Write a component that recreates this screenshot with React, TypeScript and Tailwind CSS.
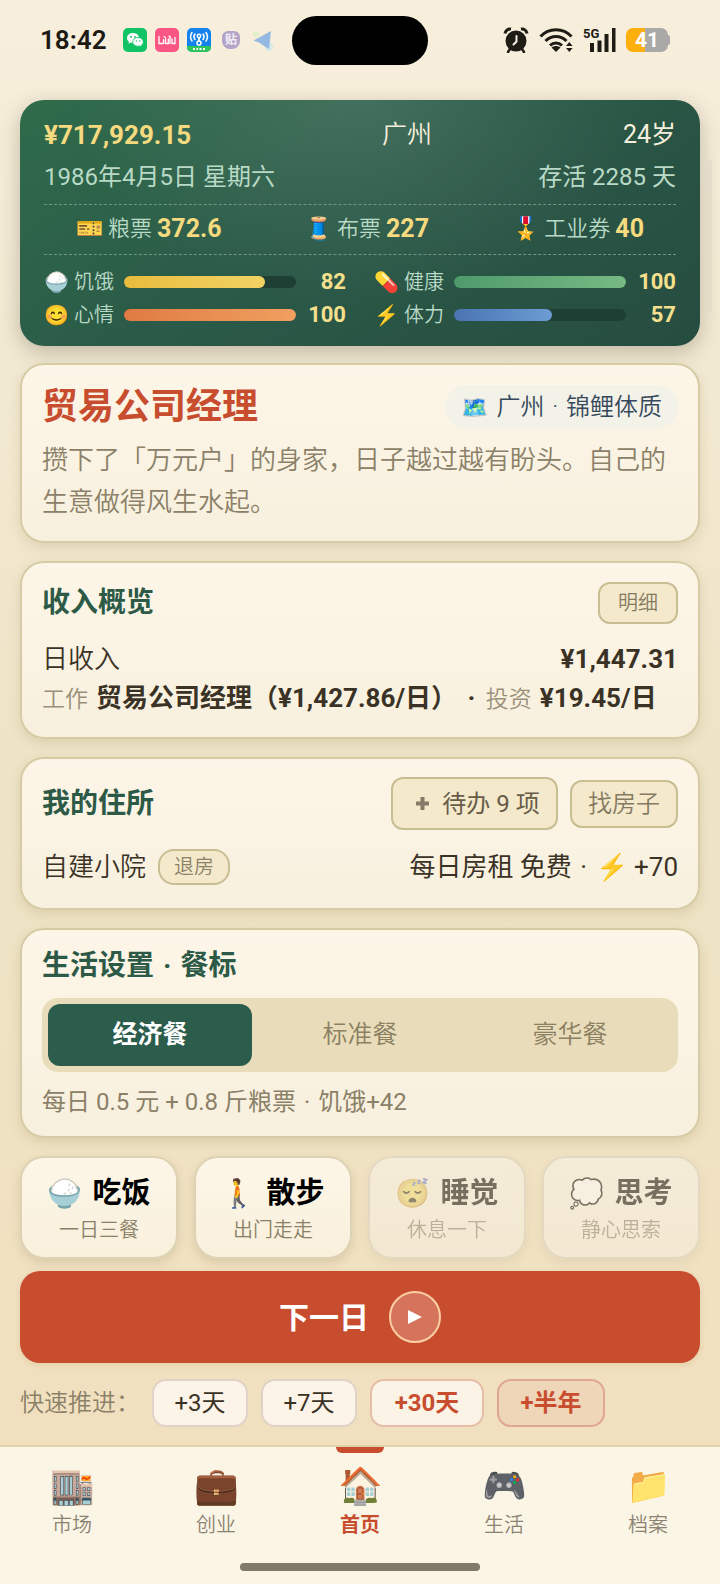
import React, { useState } from 'react';
import type { ReactNode } from 'react';

const statusBars = [
  { icon: '🍚', label: '饥饿', value: 82, fill: 'bg-gradient-to-r from-[#e8bc3c] to-[#f1d364]' },
  { icon: '💊', label: '健康', value: 100, fill: 'bg-gradient-to-r from-[#4f9a6c] to-[#76b983]' },
  { icon: '😊', label: '心情', value: 100, fill: 'bg-gradient-to-r from-[#df7b42] to-[#f0a060]' },
  { icon: '⚡', label: '体力', value: 57, fill: 'bg-gradient-to-r from-[#4a74b0] to-[#6c9cd4]' },
];

const coupons = [
  { icon: '🎫', label: '粮票', value: '372.6' },
  { icon: '🧵', label: '布票', value: '227' },
  { icon: '🎖️', label: '工业券', value: '40' },
];

const meals = ['经济餐', '标准餐', '豪华餐'];

const actions = [
  { icon: '🍚', title: '吃饭', hint: '一日三餐', disabled: false },
  { icon: '🚶', title: '散步', hint: '出门走走', disabled: false },
  { icon: '😴', title: '睡觉', hint: '休息一下', disabled: true },
  { icon: '💭', title: '思考', hint: '静心思索', disabled: true },
];

const tabs = [
  { icon: '🏬', label: '市场' },
  { icon: '💼', label: '创业' },
  { icon: '🏠', label: '首页' },
  { icon: '🎮', label: '生活' },
  { icon: '📁', label: '档案' },
];

function Card({ className, children }: { className: string; children: ReactNode }) {
  return (
    <section
      className={`rounded-3xl border-2 border-[#d6cba4] bg-gradient-to-b from-[#fdf6e8] to-[#f8f0de] px-5 shadow-[0_4px_12px_rgba(120,100,50,0.16)] ${className}`}
    >
      {children}
    </section>
  );
}

function CardTitle({ children }: { children: ReactNode }) {
  return <h2 className="text-[28px] leading-9 font-bold text-[#2c5a47]">{children}</h2>;
}

function Dot() {
  return <span className="mx-0.5"> · </span>;
}

function PhoneStatus() {
  return (
    <div className="grid h-20 grid-cols-[1fr_auto_1fr] items-center">
      <div className="flex items-center pl-10">
        <span className="w-[83px] text-[26px] font-semibold text-[#1d1a14]">18:42</span>
        <div className="flex gap-2">
          <svg width="24" height="24" viewBox="0 0 24 24" aria-hidden="true">
            <rect width="24" height="24" rx="5" fill="#10c466" />
            <path d="M10 5C6.500 5 4 7.200 4 10c0 1.600.8 2.900 2 3.800l-.5 1.900 2.200-1.100c.7.200 1.500.3 2.300.3 3.500 0 6-2.200 6-4.900S13.500 5 10 5z" fill="#fff" />
            <path d="M15 9.500c-3 0-5.300 2-5.300 4.400s2.300 4.300 5.300 4.300c.7 0 1.300-.1 1.900-.3l1.900 1-.4-1.700c1.200-.8 1.900-2 1.900-3.300 0-2.400-2.300-4.400-5.300-4.400z" fill="#fff" stroke="#10c466" strokeWidth=".8" />
            <circle cx="8" cy="9" r=".9" fill="#10c466" />
            <circle cx="12" cy="9" r=".9" fill="#10c466" />
            <circle cx="13.300" cy="13" r=".7" fill="#10c466" />
            <circle cx="16.800" cy="13" r=".7" fill="#10c466" />
          </svg>
          <svg width="24" height="24" viewBox="0 0 24 24" aria-hidden="true">
            <rect width="24" height="24" rx="5" fill="#fb5583" />
            <path d="M4 8.500v7h3.500M8.500 11.500v4M10.500 11v4.500h2.800V11M15 9v6.500M17 11v4.500h3V9.500M9 8.500l1.500 1M14 8l1.500 1" stroke="#fff" strokeWidth="1.300" fill="none" strokeLinecap="round" />
          </svg>
          <svg width="24" height="24" viewBox="0 0 24 24" aria-hidden="true">
            <rect width="24" height="24" rx="5" fill="#1583ee" />
            <path d="M0 18h24v1a5 5 0 0 1-5 5H5a5 5 0 0 1-5-5z" fill="#2fc45c" />
            <path d="M5 4.500a7.500 7.500 0 0 0 0 8.500M8 6a4.500 4.500 0 0 0 0 5.500M19 4.500a7.500 7.500 0 0 1 0 8.500M16 6a4.500 4.500 0 0 1 0 5.500" stroke="#fff" strokeWidth="1.500" fill="none" strokeLinecap="round" />
            <circle cx="12" cy="8" r="1.700" stroke="#fff" strokeWidth="1.500" fill="none" />
            <path d="M12 10v3.500" stroke="#fff" strokeWidth="1.800" />
            <circle cx="12" cy="15" r="2" stroke="#fff" strokeWidth="1.500" fill="#1583ee" />
            <path d="M6 21h2M9.500 21h1.500M12.500 21h2M16 21h2" stroke="#fff" strokeWidth="1.800" />
          </svg>
          <span className="flex h-6 w-6 items-center justify-center">
            <span className="flex h-[18px] w-[18px] items-center justify-center rounded-md rounded-b-lg bg-[#b3a5c8] text-[12px] leading-none font-bold text-[#f3edf5]">贴</span>
          </span>
          <svg width="24" height="24" viewBox="0 0 24 24" aria-hidden="true">
            <circle cx="5" cy="6" r="3" fill="#d9efc2" opacity=".7" />
            <circle cx="18" cy="19" r="4" fill="#bfe6ef" opacity=".6" />
            <path d="M20 3 2.500 12.500 8 14.500 13 18l5 3z" fill="#95b9e2" />
          </svg>
        </div>
      </div>
      <div className="h-[49px] w-[136px] rounded-full bg-black" />
      <div className="flex items-center justify-end pr-[50px]">
        <svg width="26" height="26" viewBox="0 0 26 26" className="mr-2.5" aria-hidden="true">
          <circle cx="13" cy="14" r="10.500" fill="#1f1c16" />
          <path d="M2 6.500C2.500 3.500 5 1.500 8 2M24 6.500C23.500 3.500 21 1.500 18 2" stroke="#1f1c16" strokeWidth="3" fill="none" />
          <path d="M7 22l-2 3M19 22l2 3" stroke="#1f1c16" strokeWidth="2.500" strokeLinecap="round" />
          <path d="M13.500 9v5.500l-3 3" stroke="#f6eddc" strokeWidth="2" fill="none" strokeLinecap="round" />
        </svg>
        <svg width="34" height="26" viewBox="0 0 34 26" className="mr-2" aria-hidden="true">
          <path d="M1.500 9.500c8.500-9 22.500-9 31 0M6.500 14c6-6 15-6 21 0M11 18.500c3.500-3.400 8.500-3.400 12 0" stroke="#1f1c16" strokeWidth="3" fill="none" />
          <path d="M12.500 20.500c2.500-2 6.500-2 9 0L17 25z" fill="#1f1c16" />
          <path d="M27 19l3.300-4 3.300 4zM27 21l3.300 4 3.300-4z" fill="#1f1c16" />
        </svg>
        <svg width="35" height="30" viewBox="-2 -2 35 30" className="mr-2.5" aria-hidden="true">
          <path d="M7 16h4v9H7zM14.500 13.500h4V25h-4zM21.500 7h4v18h-4zM29 1h3.500v24H29z" fill="#1f1c16" />
          <text x="0" y="11" fontSize="13" fontWeight="700" fill="#1f1c16">5G</text>
        </svg>
        <div className="flex items-center">
          <div className="flex h-6 w-[42px] items-center justify-center rounded-[7px] bg-[linear-gradient(90deg,#fdb00d_45%,#a9a9a7_45%)] text-[21px] leading-none font-bold text-white">41</div>
          <div className="h-2.5 w-0.5 rounded-r bg-[#a9a9a7]" />
        </div>
      </div>
    </div>
  );
}

function Summary() {
  return (
    <section className="rounded-3xl bg-[radial-gradient(ellipse_at_50%_0%,rgba(255,255,255,0.11),transparent_60%),linear-gradient(145deg,#2f6b4b,#2b5a48_45%,#264c40)] px-6 pt-4 pb-[15px] shadow-[0_6px_20px_rgba(60,50,40,0.28)]">
      <div className="flex h-[38px] items-center justify-between text-[25px]">
        <strong className="text-[26px] font-bold text-[#f6da80]">¥717,929.15</strong>
        <span className="text-[#f4efdc]">广州</span>
        <span className="font-normal text-[#f4efdc]">24岁</span>
      </div>
      <div className="flex h-[46px] items-center justify-between text-[24px] font-normal text-[#b9dac6]">
        <span>1986年4月5日 星期六</span>
        <span>存活 2285 天</span>
      </div>
      <div className="mt-1 flex h-[51px] items-center justify-between border-y border-dashed border-[#6f9583] px-8 pb-0.5">
        {coupons.map((coupon) => (
          <span key={coupon.label} className="flex items-center gap-[5px] whitespace-nowrap text-[22px] text-[#b9dac6]">
            <span>{coupon.icon}</span>
            <span>{coupon.label}</span>
            <strong className="text-[25px] leading-none font-bold text-[#f6da80]">{coupon.value}</strong>
          </span>
        ))}
      </div>
      <div className="mt-2.5 grid grid-cols-2 gap-x-7">
        {statusBars.map((bar) => (
          <div key={bar.label} className="flex h-[33px] items-center text-[20px]">
            <span className="w-[30px]">{bar.icon}</span>
            <span className="w-[50px] text-[#b9dac6]">{bar.label}</span>
            <div className="h-3 flex-1 rounded-full bg-[#1e3f34]">
              <div className={`h-full rounded-full ${bar.fill}`} style={{ width: `${bar.value}%` }} />
            </div>
            <strong className="w-[50px] text-right text-[22px] font-bold text-[#f6e08e]">{bar.value}</strong>
          </div>
        ))}
      </div>
    </section>
  );
}

export default function App() {
  const [meal, setMeal] = useState(0);
  const [tab, setTab] = useState(2);

  return (
    <div className="relative flex min-h-screen flex-col bg-gradient-to-b from-[#f7eedc] via-[#ede4c6] to-[#f2dfbd] font-['Roboto','Noto_Sans_CJK_SC',sans-serif] font-[350] text-[#3b3226]">
      <PhoneStatus />
      <div className="absolute top-[160px] right-2 h-[152px] w-1.5 rounded-full bg-[#e2d8c6]/70" />

      <main className="flex flex-col px-5 pt-5">
        <Summary />

        <Card className="mt-[17px] pt-5 pb-[18px]">
          <div className="flex items-center justify-between">
            <h1 className="text-[36px] leading-[44px] font-bold text-[#c84d2f]">贸易公司经理</h1>
            <span className="flex h-11 items-center gap-2 rounded-full bg-[#f3f2e9] px-4 text-[24px] text-[#36495c]">
              <span className="text-[22px]">🗺️</span>
              <span>广州<Dot />锦鲤体质</span>
            </span>
          </div>
          <p className="mt-2.5 text-[26px] leading-[42px] text-[#8b8068]">
            攒下了「万元户」的身家，日子越过越有盼头。自己的生意做得风生水起。
          </p>
        </Card>

        <Card className="mt-[18px] pt-[19px] pb-[18px]">
          <div className="flex items-center justify-between">
            <CardTitle>收入概览</CardTitle>
            <button type="button" className="h-[42px] w-20 rounded-xl border-2 border-[#c9bd94] bg-[#f4e9cb] text-[20px] text-[#847a62]">
              明细
            </button>
          </div>
          <div className="mt-4 flex items-center justify-between text-[26px] leading-[39px]">
            <span>日收入</span>
            <strong className="font-bold">¥1,447.31</strong>
          </div>
          <p className="text-[26px] leading-[39px] font-bold whitespace-nowrap">
            <span className="mr-2 text-[23px] font-[350] text-[#9a8f78]">工作</span>贸易公司经理（¥1,427.86/日） <span className="mx-1">·</span>{' '}
            <span className="mr-2 text-[23px] font-[350] text-[#9a8f78]">投资</span>¥19.45/日
          </p>
        </Card>

        <Card className="mt-[18px] pt-[18px] pb-5">
          <div className="flex items-center">
            <CardTitle>我的住所</CardTitle>
            <button type="button" className="ml-auto flex h-[53px] w-[167px] items-center justify-center gap-3 rounded-xl border-2 border-[#c9bd94] bg-[#f4e9cb] pl-1.5 text-[24px] font-normal text-[#665c49]">
              <svg width="15" height="15" viewBox="0 0 15 15" aria-hidden="true">
                <path d="M7.500 1v13M1 7.500h13" stroke="#857c68" strokeWidth="4" />
              </svg>
              <span>待办 9 项</span>
            </button>
            <button type="button" className="ml-3 h-12 w-[108px] rounded-xl border-2 border-[#c9bd94] bg-[#f4e9cb] text-[24px] text-[#847a62]">
              找房子
            </button>
          </div>
          <div className="mt-4 flex h-[42px] items-center justify-between text-[26px]">
            <div className="flex items-center gap-3">
              <span>自建小院</span>
              <button type="button" className="h-9 w-[72px] rounded-2xl border-2 border-[#c9bd94] bg-[#f4e9cb] text-[20px] leading-none text-[#8b8068]">
                退房
              </button>
            </div>
            <span className="font-normal">每日房租 免费<Dot />⚡ +70</span>
          </div>
        </Card>

        <Card className="mt-[18px] pt-[18px] pb-4">
          <CardTitle>生活设置<Dot />餐标</CardTitle>
          <div className="mt-3.5 grid grid-cols-3 gap-1.5 rounded-2xl bg-[#e9dcba] p-1.5">
            {meals.map((name, index) => (
              <button
                key={name}
                type="button"
                aria-pressed={meal === index}
                onClick={() => setMeal(index)}
                className={
                  meal === index
                    ? 'h-[62px] rounded-xl bg-[#2c5c4c] text-[25px] font-bold text-white'
                    : 'h-[62px] rounded-xl text-[25px] text-[#8b8062]'
                }
              >
                {name}
              </button>
            ))}
          </div>
          <p className="mt-3 text-[24px] leading-9 font-normal text-[#8b8068]">每日 0.5 元 + 0.8 斤粮票<Dot />饥饿+42</p>
        </Card>

        <div className="mt-[18px] grid grid-cols-4 gap-4">
          {actions.map((action) => (
            <button
              key={action.title}
              type="button"
              disabled={action.disabled}
              className="flex flex-col items-center rounded-3xl border-2 border-[#ddd2b4] bg-gradient-to-b from-[#fdf6e8] to-[#f9f0dc] pt-3 pb-3.5 shadow-[0_4px_10px_rgba(120,100,50,0.18)] disabled:opacity-50 disabled:grayscale-[0.4]"
            >
              <span className="flex h-12 items-center gap-2.5 text-black">
                <span className="text-[28px]">{action.icon}</span>
                <span className="text-[29px] font-bold">{action.title}</span>
              </span>
              <span className="text-[20px] leading-[25px] text-[#8b8068]">{action.hint}</span>
            </button>
          ))}
        </div>

        <button type="button" className="mt-3 flex h-[92px] items-center justify-center gap-5 rounded-[20px] bg-[#c84d2f] text-[30px] font-bold text-white shadow-[0_2px_6px_rgba(160,100,40,0.15)]">
          <span>下一日</span>
          <span className="flex h-[52px] w-[52px] items-center justify-center rounded-full border-2 border-[#fbcfa4] bg-[#d6745b]">
            <svg width="14" height="14" viewBox="0 0 14 14" aria-hidden="true">
              <path d="M0 0l14 7-14 7z" fill="#fff" />
            </svg>
          </span>
        </button>

        <div className="mt-4 mb-[18px] flex items-center text-[24px] text-[#3b3226]">
          <span className="w-[132px] whitespace-nowrap text-[#8b8068]">快速推进：</span>
          <div className="flex gap-[13px]">
            <button type="button" className="h-12 w-24 rounded-[14px] border-2 border-[#e0d3c6] bg-[#fdf4e9] font-normal">+3天</button>
            <button type="button" className="h-12 w-24 rounded-[14px] border-2 border-[#e0d3c6] bg-[#fdf4e9] font-normal">+7天</button>
            <button type="button" className="h-12 w-[114px] rounded-[14px] border-2 border-[#e6bda8] bg-[#fbf4e6] font-bold text-[#c84d2f]">+30天</button>
            <button type="button" className="h-12 w-[108px] rounded-[14px] border-2 border-[#e0a790] bg-[#f0d6b8] font-bold text-[#c84d2f]">+半年</button>
          </div>
        </div>
      </main>

      <nav className="mt-auto border-t-2 border-[#dfd2aa] bg-[#fbf5e6] pb-3.5">
        <div className="grid grid-cols-5">
          {tabs.map((item, index) => (
            <button
              key={item.label}
              type="button"
              onClick={() => setTab(index)}
              className={`relative flex flex-col items-center pt-3.5 text-[20px] ${tab === index ? 'font-bold text-[#c84d2f]' : 'text-[#8b8272]'}`}
            >
              {tab === index && <span className="absolute top-0 h-1.5 w-12 rounded-b-md bg-[#c84d2f]" />}
              <span className="text-[36px] leading-[50px] font-normal">{item.icon}</span>
              <span className="leading-7">{item.label}</span>
            </button>
          ))}
        </div>
        <div className="mx-auto mt-6 h-2 w-1/3 rounded-full bg-[#7f7a6a]" />
      </nav>
    </div>
  );
}
